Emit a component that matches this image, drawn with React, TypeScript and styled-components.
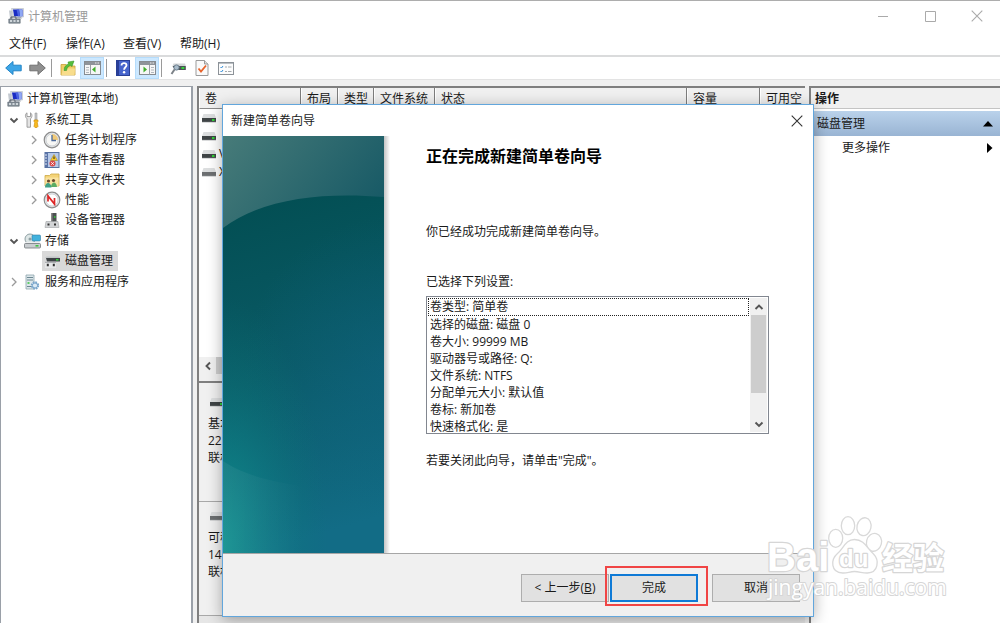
import React from "react";
import styled, { createGlobalStyle, css } from "styled-components";

const ui = `"Open Sans", "Noto Sans CJK SC", sans-serif`;

const GlobalStyle = createGlobalStyle`
  *, *::after { box-sizing: border-box; }
  body {
    margin: 0;
    background: #f0f0f0;
    color: #1a1a1a;
    font: 12px/18px ${ui};
  }
  button { font: inherit; color: inherit; }
  h1, h2, p, ul { margin: 0; padding: 0; }
  svg { display: block; flex: none; }
`;

/* ---------- main window ---------- */

const Window = styled.div`
  position: relative;
  display: flex;
  flex-direction: column;
  min-height: 100vh;
  overflow: hidden;
  border-top: 1px solid #adadad;
`;

const TitleBar = styled.header`
  display: flex;
  align-items: center;
  height: 30px;
  padding-left: 8px;
  background: #fff;
`;

const WindowTitle = styled.h1`
  flex: 1;
  margin-left: 4px;
  padding-top: 1px;
  font-size: 12px;
  font-weight: 400;
  color: #999;
`;

const CaptionButton = styled.button<{ $dark?: boolean }>`
  display: grid;
  place-items: center;
  width: 47px;
  height: 30px;
  padding: 0;
  border: 0;
  background: transparent;
  color: ${(p) => (p.$dark ? "#333" : "#aaa")};
`;

const MenuBar = styled.nav`
  display: flex;
  height: 26px;
  background: #fff;
  border-bottom: 2px solid #dadbdc;
`;

const MenuButton = styled.button`
  min-width: 57px;
  padding: 2px 9px 0;
  border: 0;
  background: transparent;
  text-align: left;
  white-space: nowrap;
`;

const ToolBar = styled.div`
  display: flex;
  align-items: center;
  height: 23px;
  padding-left: 1px;
  background: #fff;
  border-bottom: 1px solid #e3e3e3;
`;

const ToolButton = styled.button<{ $active?: boolean }>`
  display: grid;
  place-items: center;
  width: 24px;
  height: 22px;
  padding: 0;
  border: 1px solid ${(p) => (p.$active ? "#b5dcfb" : "transparent")};
  background: ${(p) => (p.$active ? "#cce8ff" : "transparent")};
`;

const ToolDivider = styled.span`
  width: 1px;
  height: 18px;
  margin: 0 4px 0 2px;
  background: #9a9a9a;
`;

const Workspace = styled.main`
  flex: 1;
  display: grid;
  grid-template-columns: 193px minmax(0, 1fr) 191px;
  column-gap: 4px;
  padding-top: 6px;
`;

/* ---------- navigation tree ---------- */

const TreePane = styled.section`
  padding-top: 2px;
  background: #fff;
  border: 1px solid #9aa0a8;
  border-width: 1px 2px 0 1px;
`;

const TreeGroup = styled.div`
  margin-bottom: 1px;
`;

const TreeRow = styled.div<{ $level: number }>`
  display: flex;
  align-items: center;
  height: 20px;
  padding-left: ${(p) => [4, 5, 25][p.$level]}px;
`;

const TreeToggle = styled.span`
  display: grid;
  place-items: center;
  width: 16px;
  height: 16px;
`;

const TreeIcon = styled.span`
  display: grid;
  place-items: center;
  width: 18px;
  height: 18px;
`;

const TreeLabel = styled.span<{ $selected?: boolean; $root?: boolean }>`
  display: flex;
  align-items: center;
  gap: ${(p) => (p.$root ? 3 : 4)}px;
  height: 20px;
  padding: 0 5px 0 1px;
  white-space: nowrap;
  background: ${(p) => (p.$selected ? "#d9d9d9" : "transparent")};
`;

/* ---------- volume list and disks ---------- */

const CenterPane = styled.section`
  display: flex;
  flex-direction: column;
  border-left: 2px solid #7f7f7f;
  border-top: 2px solid #7f7f7f;
`;

const VolumeArea = styled.div`
  flex: 1;
  background: #fff;
`;

const VolumeTable = styled.table`
  width: 100%;
  border-collapse: separate;
  border-spacing: 0;
  table-layout: fixed;
`;

const ColumnHead = styled.th<{ $width?: number }>`
  width: ${(p) => (p.$width ? `${p.$width}px` : "auto")};
  height: 21px;
  padding: 2px 0 0 5px;
  overflow: hidden;
  background: #f0f0f0;
  border-bottom: 1px solid #8a8a8a;
  border-left: 1px solid #fff;
  border-right: 1px solid #7d7d7d;
  font-weight: 400;
  text-align: left;
  white-space: nowrap;
  &:last-child { border-right-color: #f0f0f0; }
`;

const VolumeCell = styled.td`
  height: 18px;
  padding: 0 0 0 3px;
`;

const VolumeName = styled.span`
  display: flex;
  align-items: center;
  gap: 3px;
  line-height: 18px;
`;

const HorizontalScroll = styled.div`
  display: flex;
  height: 17px;
  background: #f0f0f0;
`;

const ScrollArrow = styled.button`
  display: grid;
  place-items: center;
  width: 17px;
  height: 17px;
  padding: 0;
  border: 0;
  background: #f0f0f0;
  color: #505050;
`;

const ScrollThumb = styled.span<{ $length: number; $vertical?: boolean }>`
  background: #cdcdcd;
  ${(p) =>
    p.$vertical
      ? css`height: ${p.$length}px; margin: 0 1px;`
      : css`width: ${p.$length}px;`}
`;

const DiskArea = styled.div`
  margin-top: 7px;
  padding-top: 5px;
  border-top: 2px solid #7f7f7f;
`;

const Disk = styled.div`
  height: 114px;
  padding: 10px 9px 0;
  border-bottom: 1px solid #a8a8a8;
  line-height: 17px;
`;

const DiskIcon = styled.div`
  height: 17px;
  padding-left: 2px;
`;

const DiskFooter = styled.div`
  height: 7px;
  background: #e6e6e6;
`;

/* ---------- actions ---------- */

const ActionsPane = styled.aside`
  background: #fff;
  border-left: 2px solid #7f7f7f;
  border-top: 2px solid #7f7f7f;
`;

const ActionsTitle = styled.h2`
  height: 21px;
  padding: 1px 0 0 4px;
  background: #f0f0f0;
  border-bottom: 1px solid #c4c4c4;
  font-size: 12px;
  line-height: 20px;
`;

const ActionRow = styled.button<{ $heading?: boolean }>`
  display: flex;
  align-items: center;
  justify-content: space-between;
  width: 100%;
  height: ${(p) => (p.$heading ? 25 : 24)}px;
  padding: 0 7px 0 ${(p) => (p.$heading ? 6 : 31)}px;
  border: 0;
  background: ${(p) => (p.$heading ? "linear-gradient(#bad2eb, #99b4d3)" : "#fff")};
  ${(p) => p.$heading && "margin-top: 2px;"}
`;

/* ---------- wizard dialog ---------- */

const Dialog = styled.section`
  position: absolute;
  left: 222px;
  top: 103px;
  width: 592px;
  background: #fff;
  border: 1px solid #62a6dc;
  box-shadow: 0 3px 14px rgba(0, 0, 0, 0.32);
`;

const DialogTitleBar = styled.header`
  display: flex;
  align-items: center;
  height: 31px;
  padding-left: 8px;
`;

const DialogTitle = styled.h2`
  flex: 1;
  font-size: 12px;
  font-weight: 400;
`;

const DialogClose = styled(CaptionButton)`
  width: 33px;
`;

const DialogBody = styled.div`
  display: flex;
  min-height: 417px;
`;

const Banner = styled.div`
  display: flex;
  width: 167px;
  padding-right: 6px;
  background: linear-gradient(90deg, #c4c4c4 161px, #fff 167px);
`;

const DialogContent = styled.div`
  flex: 1;
  padding: 8px 44px 0 36px;
`;

const Heading = styled.h2`
  font-size: 16px;
  font-weight: 700;
  line-height: 24px;
  color: #000;
`;

const Paragraph = styled.p<{ $gap: number }>`
  margin-top: ${(p) => p.$gap}px;
`;

const SettingsBox = styled.div`
  display: flex;
  height: 138px;
  margin-top: 5px;
  padding: 1px;
  border: 1px solid #828790;
`;

const SettingsList = styled.ul`
  flex: 1;
  overflow: hidden;
  list-style: none;
`;

const Setting = styled.li<{ $focused?: boolean }>`
  height: 17px;
  padding: 0 2px;
  line-height: 17px;
  white-space: nowrap;
  ${(p) =>
    p.$focused &&
    css`
      height: 18px;
      padding: 0 1px;
      border: 1px dotted #222;
      line-height: 16px;
    `}
`;

const VerticalScroll = styled.div`
  display: flex;
  flex-direction: column;
  width: 17px;
  margin-left: 1px;
  background: #f0f0f0;
  ${ScrollArrow}:last-child { margin-top: auto; }
`;

const DialogFooter = styled.footer`
  display: flex;
  justify-content: flex-end;
  height: 63px;
  padding: 20px 13px 0 0;
  background: #f0f0f0;
  border-top: 1px solid #a6a6a6;
`;

const ButtonPair = styled.div`
  display: flex;
  gap: 1px;
  margin-right: 14px;
`;

const PushButton = styled.button<{ $default?: boolean }>`
  width: 88px;
  height: 28px;
  padding: 0;
  background: #e1e1e1;
  border: ${(p) => (p.$default ? "2px solid #0f7ad6" : "1px solid #adadad")};
`;

const Highlighted = styled.div`
  position: relative;
  &::after {
    content: "";
    position: absolute;
    left: -5px;
    top: -8px;
    width: 103px;
    height: 40px;
    border: 2px solid #f04545;
    pointer-events: none;
  }
`;

const Watermark = styled.svg`
  position: absolute;
  left: 760px;
  top: 509px;
  pointer-events: none;
`;

/* ---------- drawings ---------- */

const Chevron = ({ dir, color = "#555" }: { dir: "up" | "down" | "left" | "right"; color?: string }) => {
  const d = {
    up: "M1.5 7 5 3.5 8.5 7",
    down: "M1.5 3.5 5 7 8.5 3.5",
    left: "M7 1.5 3.5 5 7 8.5",
    right: "M3 1 7 5 3 9",
  }[dir];
  return (
    <svg width="10" height="10" viewBox="0 0 10 10" fill="none" stroke={color} strokeWidth={dir === "right" ? 1.3 : 1.9}>
      <path d={d} />
    </svg>
  );
};

const CloseGlyph = () => (
  <svg width="12" height="12" viewBox="0 0 12 12" stroke="currentColor" strokeWidth="1.1">
    <path d="M.7.7l10.6 10.6M11.3.7.7 11.3" />
  </svg>
);

const ComputerIcon = () => (
  <svg width="16" height="16" viewBox="0 0 16 16">
    <path d="M1 2.5h3l1 8H2z" fill="#c3c9d0" />
    <path d="M3.5.5h12v8.500h-10z" fill="#dfe3e8" stroke="#b3bac3" strokeWidth=".6" />
    <path d="M5 1.500h9.500V8.200H6.200z" fill="#1a2cc4" />
    <path d="M11 1.500h3.500V8.200H12z" fill="#8fa8f4" />
    <path d="M8.500 1.500H11L12 8.200H10z" fill="#4a63e2" />
    <path d="M9 9h4l1 1.500H8z" fill="#a3abb5" />
    <path d="M.8 11h11.400v4.200H.8z" fill="#87919a" stroke="#5b6670" strokeWidth=".6" />
    <path d="M2 13h2M5.500 13h2M9 13h2" stroke="#e6ebee" strokeWidth="1.500" />
    <path d="M3 11V9h5v2" fill="none" stroke="#4c5560" />
  </svg>
);

const ArrowIcon = ({ color, edge, flip }: { color: string; edge: string; flip?: boolean }) => (
  <svg width="17" height="16" viewBox="0 0 17 16">
    <path
      transform={flip ? "translate(17 0) scale(-1 1)" : undefined}
      d="M.7 8 8 1.500v3.700h8.200v5.600H8v3.700z"
      fill={color}
      stroke={edge}
      strokeLinejoin="round"
    />
  </svg>
);

const FolderUpIcon = () => (
  <svg width="16" height="16" viewBox="0 0 16 16">
    <path d="M1 4.500h5l1.500 1.500H15v9H1z" fill="#f0cc66" stroke="#c9a23a" strokeWidth=".8" />
    <path d="M1.500 15 3 8.500h12L14.500 15z" fill="#f8dd8c" />
    <path d="M4 10.500C4 7 6 4.500 8.500 4L8 2l6-1-2 5.500-1.500-1C8.500 6 7 7.500 6.500 10.500z" fill="#57bd3c" stroke="#2f8f1d" strokeWidth=".5" />
  </svg>
);

const PanelIcon = ({ dir }: { dir: "left" | "right" }) => (
  <svg width="17" height="14" viewBox="0 0 17 14">
    <rect x=".5" y=".5" width="16" height="13" fill="#f6f6f6" stroke="#868b90" />
    <path d="M1 2.500h15" stroke="#8e9399" strokeWidth="3" />
    <path d="M11 2h1.500M13.500 2H15" stroke="#eee" />
    <path d={dir === "left" ? "M6.500 4v9.500" : "M10.500 4v9.500"} stroke="#9a9fa5" />
    <path d={dir === "left" ? "M2 6.500h3M2 9h3M2 11.500h3" : "M12 6.500h3M12 9h3M12 11.500h3"} stroke="#b3b8bd" />
    <path d={dir === "left" ? "M11.500 5.500v6L8 8.500z" : "M4.500 5.500v6L8 8.500z"} fill="#3fae2a" />
  </svg>
);

const HelpIcon = () => (
  <svg width="14" height="16" viewBox="0 0 14 16">
    <rect x=".5" y=".5" width="13" height="15" fill="#4664cc" stroke="#283f96" />
    <path d="M1 1h2v14H1z" fill="#2a3f98" />
    <path d="M5.500 5.500c0-3.200 5-3 5-.2 0 2-2.400 2-2.400 4.400" fill="none" stroke="#fff" strokeWidth="1.800" />
    <circle cx="8.100" cy="12.300" r="1.200" fill="#fff" />
  </svg>
);

const ConnectIcon = () => (
  <svg width="16" height="16" viewBox="0 0 16 16">
    <path d="M3.500 3.500H15l.8 2.500H2.500z" fill="#d3d6d8" />
    <path d="M2.500 6h13.300v4H5z" fill="#4b5255" />
    <path d="M11.500 8h2.800" stroke="#35d43a" strokeWidth="2" />
    <circle cx="6.500" cy="7.500" r="2.600" fill="#a9bccb" stroke="#6d8090" />
    <path d="M4.500 9.500 1.500 14" stroke="#7c8288" strokeWidth="2" />
  </svg>
);

const CheckPageIcon = () => (
  <svg width="14" height="16" viewBox="0 0 14 16">
    <path d="M1 .5h8.500L13 4v11.500H1z" fill="#fafafa" stroke="#9b9b9b" />
    <path d="M9.500.5V4H13" fill="#ddd" stroke="#9b9b9b" />
    <path d="M3.500 8.500 6 11.500l5-6" fill="none" stroke="#e8642c" strokeWidth="1.800" />
  </svg>
);

const OptionsIcon = () => (
  <svg width="16" height="13" viewBox="0 0 16 13">
    <rect x=".5" y=".5" width="15" height="12" fill="#fcfcfc" stroke="#8c9298" />
    <path d="M1 1.500h14" stroke="#b9bec3" />
    <path d="M2.500 5l1 1 1.500-2M2.500 9l1 1L5 8" fill="none" stroke="#2f8bd8" />
    <path d="M7 5h2M10 5h3.500M7 9.500h2M10 9.500h3.500" stroke="#a4a9ae" strokeWidth="1.200" />
  </svg>
);

const ToolsIcon = () => (
  <svg width="16" height="16" viewBox="0 0 16 16">
    <path d="M3 .8C1 2 .8 5 3 6.800V15.200h3.500V6.800c2-1.800 1.800-4.800 0-6V4.500H3z" fill="#e4e4e4" stroke="#8d8d8d" strokeWidth=".8" />
    <path d="M11 1h2v7h-2z" fill="#c6c9cc" stroke="#888" strokeWidth=".5" />
    <path d="M10 8h4v1.500l-.7 1 .7 4-1 1h-2l-1-1 .7-4-.7-1z" fill="#f7b91f" stroke="#c98a0a" strokeWidth=".6" />
  </svg>
);

const ClockIcon = () => (
  <svg width="18" height="18" viewBox="0 0 18 18">
    <circle cx="9" cy="9" r="7.800" fill="#e9ebee" stroke="#8d8d8d" strokeWidth="1.200" />
    <circle cx="9" cy="9" r="6" fill="#f7f7f5" stroke="#b6babd" strokeWidth=".6" />
    <path d="M9 9V3a6 6 0 0 1 6 6z" fill="#f2ca77" />
    <path d="M9 4v5.500h4" fill="none" stroke="#4b6a9b" strokeWidth="1.300" />
  </svg>
);

const EventIcon = () => (
  <svg width="16" height="16" viewBox="0 0 16 16">
    <rect x="1" y=".5" width="14" height="15" fill="#b6c9e8" stroke="#56719f" />
    <path d="M1 .5h3v15H1z" fill="#5a74a8" />
    <path d="M1 3h2M1 6h2M1 9h2M1 12h2" stroke="#e3e9f4" />
    <path d="M10 2.500 13.500 8.500h-7z" fill="#f8cb2c" stroke="#9c7b10" strokeWidth=".5" />
    <path d="M10 4.500v2.500" stroke="#222" />
    <circle cx="8.500" cy="11.500" r="3" fill="#d94a4a" />
    <path d="M7.300 10.300l2.400 2.400M9.700 10.300l-2.400 2.400" stroke="#fff" />
  </svg>
);

const SharedIcon = () => (
  <svg width="16" height="16" viewBox="0 0 16 16">
    <path d="M1 3.500h4.500L7 2h8v12H1z" fill="#f4d377" stroke="#cda845" strokeWidth=".8" />
    <path d="M1.500 5.500h13V14h-13z" fill="#f9e2a0" />
    <circle cx="4.500" cy="9" r="1.600" fill="#6b4a2c" />
    <circle cx="9.500" cy="8.500" r="1.600" fill="#6b4a2c" />
    <path d="M1 15.500c0-6 6-6 6.500 0z" fill="#3fa187" />
    <path d="M7 15c.5-6 5.500-6 6 0z" fill="#5cad64" />
  </svg>
);

const PerformanceIcon = () => (
  <svg width="18" height="18" viewBox="0 0 18 18">
    <circle cx="9" cy="9" r="7.800" fill="#e9ebee" stroke="#8d8d8d" strokeWidth="1.200" />
    <circle cx="9" cy="9" r="6" fill="#fff" stroke="#b6babd" strokeWidth=".6" />
    <path d="M5 10.500V5l6.500 8V7" fill="none" stroke="#dd2525" strokeWidth="1.700" />
  </svg>
);

const DeviceIcon = () => (
  <svg width="16" height="16" viewBox="0 0 16 16">
    <path d="M7 1h5.500v9H7z" fill="#4d5052" />
    <path d="M7 1h1.500v9H7z" fill="#8b8b8b" />
    <path d="M10 5h1.500" stroke="#35d43a" strokeWidth="1.500" />
    <path d="M2 9.500h12l1 6H1z" fill="#d2d4d6" stroke="#9fa2a5" strokeWidth=".6" />
    <path d="M3.500 12.500h2M10 12.500h2" stroke="#333" strokeWidth="2" />
  </svg>
);

const StorageIcon = () => (
  <svg width="17" height="16" viewBox="0 0 17 16">
    <circle cx="6" cy="6" r="5" fill="#dde6e6" stroke="#8fa0a3" />
    <circle cx="6" cy="6" r="1.500" fill="#8fa0a3" />
    <rect x="8" y="2" width="8.500" height="6" rx="1" fill="#42b1dc" stroke="#2f7ea6" strokeWidth=".6" />
    <path d="M1.500 9h14l1 2H.5z" fill="#eceeef" />
    <rect x=".5" y="10.500" width="16" height="4.500" rx="1" fill="#c9cdd0" stroke="#71777b" strokeWidth=".8" />
    <path d="M11.500 12.800h3" stroke="#35c43a" strokeWidth="1.500" />
  </svg>
);

const DiskManageIcon = () => (
  <svg width="16" height="16" viewBox="0 0 16 16">
    <path d="M2.500 3.500H15l.8 1.500H1z" fill="#c2c5c7" />
    <path d="M2 5h14v3.500H3z" fill="#3d4245" />
    <path d="M12 6.800h2.500" stroke="#35d43a" strokeWidth="1.500" />
    <path d="M1 9h11v6H1z" fill="#e6e7e8" />
    <path d="M1 9.300h11" stroke="#a3a6a8" />
    <path d="M2.800 12h2M8.800 12h2" stroke="#333" strokeWidth="2.500" />
  </svg>
);

const ServicesIcon = () => (
  <svg width="16" height="16" viewBox="0 0 16 16">
    <path d="M2 1h8v14H2z" fill="#dce6ea" stroke="#8ea4ad" strokeWidth=".8" />
    <path d="M3 3.500h6M3 6h6M3 12.500h6" stroke="#6c8791" strokeWidth="1.200" />
    <path d="M3.500 9h2" stroke="#35c43a" strokeWidth="1.500" />
    <circle cx="11" cy="11.500" r="3.200" fill="#dceaf5" stroke="#7ba7cc" strokeWidth="2" strokeDasharray="1.600 .9" />
    <circle cx="11" cy="11.500" r="2.600" fill="none" stroke="#7ba7cc" />
  </svg>
);

const DriveIcon = ({ online = true }: { online?: boolean }) => (
  <svg width="14" height="9" viewBox="0 0 14 9">
    <path d="M1.500 0h11L14 4H0z" fill="#dcdedf" />
    <path d="M0 4h14v4H0z" fill={online ? "#3f4446" : "#6c6f71"} />
    <path d="M0 8.300h14" stroke="#bdbfc0" strokeWidth=".7" />
    {online && <path d="M10 6h2.500" stroke="#2fd135" strokeWidth="2" />}
  </svg>
);

const BannerArt = () => (
  <svg width="161" height="100%" viewBox="0 0 161 417" preserveAspectRatio="none">
    <defs>
      <linearGradient id="sea" gradientUnits="userSpaceOnUse" x1="0" y1="80" x2="90" y2="400">
        <stop offset="0" stopColor="#034f54" />
        <stop offset=".5" stopColor="#0a5b67" />
        <stop offset="1" stopColor="#126c86" />
      </linearGradient>
      <radialGradient id="right" gradientUnits="userSpaceOnUse" cx="170" cy="230" r="150">
        <stop offset="0" stopColor="#12648a" stopOpacity=".4" />
        <stop offset="1" stopColor="#12648a" stopOpacity="0" />
      </radialGradient>
      <radialGradient id="glow" gradientUnits="userSpaceOnUse" cx="0" cy="410" r="250" gradientTransform="matrix(.42 0 0 1 0 0)">
        <stop offset="0" stopColor="#109490" stopOpacity=".9" />
        <stop offset=".5" stopColor="#0d8586" stopOpacity=".4" />
        <stop offset="1" stopColor="#0a7476" stopOpacity="0" />
      </radialGradient>
      <linearGradient id="foam" x1="0" y1="0" x2="1" y2="0">
        <stop offset="0" stopColor="#fff" stopOpacity=".06" />
        <stop offset=".5" stopColor="#fff" stopOpacity="0" />
      </linearGradient>
      <linearGradient id="sky" gradientUnits="userSpaceOnUse" x1="0" y1="0" x2="130" y2="100">
        <stop offset="0" stopColor="#477b79" />
        <stop offset="1" stopColor="#185a66" />
      </linearGradient>
    </defs>
    <path d="M0 0h161v417H0z" fill="url(#sea)" />
    <path d="M0 59h161v358H0z" fill="url(#right)" />
    <path d="M0 59h161v358H0z" fill="url(#glow)" />
    <path d="M0 325c24 16 55 25 161 34v58H0z" fill="url(#foam)" />
    <path d="M0 0h161v61C100 56 40 62 0 92z" fill="url(#sky)" />
  </svg>
);

const BaiduMark = () => (
  <Watermark width="200" height="104" viewBox="760 510 200 104" aria-label="Bai du 经验">
    <g fill="#fff" fillOpacity=".75" stroke="#d9d9d9" strokeWidth="1.300">
      <ellipse cx="835.700" cy="538.300" rx="7" ry="9" />
      <ellipse cx="848" cy="525.700" rx="6.700" ry="9" />
      <ellipse cx="864" cy="526.700" rx="7" ry="9" transform="rotate(12 864 526.700)" />
      <ellipse cx="874" cy="542.300" rx="7.500" ry="9" transform="rotate(14 874 542.300)" />
      <path d="M854.500 539.500c-9 0-11 9-17 14-7 6-7 19 5 19.500 5 .3 7-1.500 12-1.500s8 1.700 13 1.500c11-.5 12-13 6-19-6-5-9-14.500-19-14.500z" />
    </g>
    <g stroke="#d6d6d6" strokeLinejoin="round" paintOrder="stroke" fontWeight="700" fill="#fff" strokeWidth="2.500">
      <text x="767" y="571" fontSize="40" fontFamily="Liberation Sans, sans-serif">Bai</text>
      <text x="839" y="567" fontSize="24" fontFamily="Liberation Sans, sans-serif">du</text>
      <text x="882" y="569" fontSize="31" fontFamily="Noto Sans CJK SC, sans-serif">经验</text>
      <text x="768" y="595" fontSize="21" fontWeight="400" fontFamily="Open Sans, sans-serif" strokeWidth="2">jingyan.baidu.com</text>
    </g>
  </Watermark>
);

/* ---------- parts ---------- */

type NodeProps = {
  level: number;
  icon: React.ReactNode;
  label: string;
  state?: "open" | "closed";
  selected?: boolean;
};

const TreeNode = ({ level, icon, label, state, selected }: NodeProps) => (
  <TreeRow
    $level={level}
    role="treeitem"
    aria-level={level + 1}
    aria-selected={!!selected}
    aria-expanded={state ? state === "open" : undefined}
  >
    {level > 0 && (
      <TreeToggle>
        {state === "open" && <Chevron dir="down" />}
        {state === "closed" && <Chevron dir="right" color="#9a9a9a" />}
      </TreeToggle>
    )}
    <TreeLabel $selected={selected} $root={level === 0}>
      <TreeIcon>{icon}</TreeIcon>
      {label}
    </TreeLabel>
  </TreeRow>
);

const columns: { name: string; width?: number }[] = [
  { name: "卷", width: 102 },
  { name: "布局", width: 37 },
  { name: "类型", width: 36 },
  { name: "文件系统", width: 61 },
  { name: "状态" },
  { name: "容量", width: 73 },
  { name: "可用空", width: 45 },
];

const volumes = [
  { name: "", online: true },
  { name: "", online: true },
  { name: "V", online: true },
  { name: "X", online: false },
];

const settings = [
  "卷类型: 简单卷",
  "选择的磁盘: 磁盘 0",
  "卷大小: 99999 MB",
  "驱动器号或路径: Q:",
  "文件系统: NTFS",
  "分配单元大小: 默认值",
  "卷标: 新加卷",
  "快速格式化: 是",
];

const disks = [
  { lines: ["基本", "22", "联机"], online: true },
  { lines: ["可移", "14", "联机"], online: false },
];

export default function App() {
  return (
    <>
      <GlobalStyle />
      <Window>
        <TitleBar>
          <ComputerIcon />
          <WindowTitle>计算机管理</WindowTitle>
          <CaptionButton aria-label="最小化">
            <svg width="12" height="12" stroke="currentColor"><path d="M1 6.500h10" /></svg>
          </CaptionButton>
          <CaptionButton aria-label="最大化">
            <svg width="12" height="12" stroke="currentColor" fill="none"><path d="M1.500 1.500h10v10h-10z" /></svg>
          </CaptionButton>
          <CaptionButton aria-label="关闭"><CloseGlyph /></CaptionButton>
        </TitleBar>

        <MenuBar>
          {["文件(F)", "操作(A)", "查看(V)", "帮助(H)"].map((m) => (
            <MenuButton key={m}>{m}</MenuButton>
          ))}
        </MenuBar>

        <ToolBar role="toolbar">
          <ToolButton aria-label="后退"><ArrowIcon color="#3da5e6" edge="#2384c6" /></ToolButton>
          <ToolButton aria-label="前进"><ArrowIcon color="#909090" edge="#707070" flip /></ToolButton>
          <ToolDivider />
          <ToolButton aria-label="向上"><FolderUpIcon /></ToolButton>
          <ToolButton aria-label="显示控制台树" $active><PanelIcon dir="left" /></ToolButton>
          <ToolDivider />
          <ToolButton aria-label="帮助"><HelpIcon /></ToolButton>
          <ToolButton aria-label="显示操作窗格" $active><PanelIcon dir="right" /></ToolButton>
          <ToolDivider />
          <ToolButton aria-label="重新扫描磁盘"><ConnectIcon /></ToolButton>
          <ToolButton aria-label="属性"><CheckPageIcon /></ToolButton>
          <ToolButton aria-label="设置"><OptionsIcon /></ToolButton>
        </ToolBar>

        <Workspace>
          <TreePane role="tree">
            <TreeGroup>
              <TreeNode level={0} icon={<ComputerIcon />} label="计算机管理(本地)" />
            </TreeGroup>
            <TreeGroup>
              <TreeNode level={1} state="open" icon={<ToolsIcon />} label="系统工具" />
              <TreeNode level={2} state="closed" icon={<ClockIcon />} label="任务计划程序" />
              <TreeNode level={2} state="closed" icon={<EventIcon />} label="事件查看器" />
              <TreeNode level={2} state="closed" icon={<SharedIcon />} label="共享文件夹" />
              <TreeNode level={2} state="closed" icon={<PerformanceIcon />} label="性能" />
              <TreeNode level={2} icon={<DeviceIcon />} label="设备管理器" />
            </TreeGroup>
            <TreeGroup>
              <TreeNode level={1} state="open" icon={<StorageIcon />} label="存储" />
              <TreeNode level={2} icon={<DiskManageIcon />} label="磁盘管理" selected />
            </TreeGroup>
            <TreeNode level={1} state="closed" icon={<ServicesIcon />} label="服务和应用程序" />
          </TreePane>

          <CenterPane>
            <VolumeArea>
              <VolumeTable>
                <thead>
                  <tr>
                    {columns.map((c) => (
                      <ColumnHead key={c.name} $width={c.width}>{c.name}</ColumnHead>
                    ))}
                  </tr>
                </thead>
                <tbody>
                  {volumes.map((v, i) => (
                    <tr key={i}>
                      <VolumeCell colSpan={columns.length}>
                        <VolumeName>
                          <DriveIcon online={v.online} />
                          {v.name}
                        </VolumeName>
                      </VolumeCell>
                    </tr>
                  ))}
                </tbody>
              </VolumeTable>
            </VolumeArea>
            <HorizontalScroll>
              <ScrollArrow aria-label="向左滚动"><Chevron dir="left" /></ScrollArrow>
              <ScrollThumb $length={420} />
            </HorizontalScroll>
            <DiskArea>
              {disks.map((d, i) => (
                <Disk key={i}>
                  <DiskIcon><DriveIcon online={d.online} /></DiskIcon>
                  {d.lines.map((line) => <div key={line}>{line}</div>)}
                </Disk>
              ))}
              <DiskFooter />
            </DiskArea>
          </CenterPane>

          <ActionsPane>
            <ActionsTitle>操作</ActionsTitle>
            <ActionRow $heading>
              磁盘管理
              <svg width="10" height="6"><path d="M5 0l5 5.500H0z" fill="#000" /></svg>
            </ActionRow>
            <ActionRow>
              更多操作
              <svg width="7" height="10"><path d="M1 0l5.500 5L1 10z" fill="#000" /></svg>
            </ActionRow>
          </ActionsPane>
        </Workspace>

        <Dialog role="dialog" aria-labelledby="wizard-title">
          <DialogTitleBar>
            <DialogTitle id="wizard-title">新建简单卷向导</DialogTitle>
            <DialogClose $dark aria-label="关闭"><CloseGlyph /></DialogClose>
          </DialogTitleBar>
          <DialogBody>
            <Banner><BannerArt /></Banner>
            <DialogContent>
              <Heading>正在完成新建简单卷向导</Heading>
              <Paragraph $gap={55}>你已经成功完成新建简单卷向导。</Paragraph>
              <Paragraph $gap={32} id="settings-label">已选择下列设置:</Paragraph>
              <SettingsBox>
                <SettingsList role="listbox" aria-labelledby="settings-label">
                  {settings.map((s, i) => (
                    <Setting key={s} role="option" aria-selected={false} $focused={i === 0}>{s}</Setting>
                  ))}
                </SettingsList>
                <VerticalScroll>
                  <ScrollArrow aria-label="向上滚动"><Chevron dir="up" /></ScrollArrow>
                  <ScrollThumb $vertical $length={78} />
                  <ScrollArrow aria-label="向下滚动"><Chevron dir="down" /></ScrollArrow>
                </VerticalScroll>
              </SettingsBox>
              <Paragraph $gap={18}>若要关闭此向导，请单击"完成"。</Paragraph>
            </DialogContent>
          </DialogBody>
          <DialogFooter>
            <ButtonPair>
              <PushButton>&lt; 上一步(<u>B</u>)</PushButton>
              <Highlighted><PushButton $default>完成</PushButton></Highlighted>
            </ButtonPair>
            <PushButton>取消</PushButton>
          </DialogFooter>
        </Dialog>

        <BaiduMark />
      </Window>
    </>
  );
}
